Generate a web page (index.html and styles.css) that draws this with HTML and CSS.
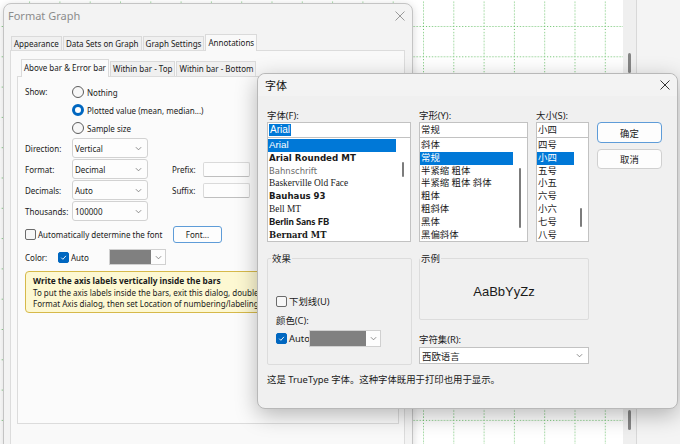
FILE: index.html
```html
<!DOCTYPE html>
<html lang="zh-CN">
<head>
    <meta charset="UTF-8">
    <meta name="viewport" content="width=device-width, initial-scale=1.0">
    <title>Format Graph</title>
    <link rel="stylesheet" href="styles.css">
</head>
<body>
    <!-- graph sheet behind the dialogs -->
    <div class="desktop">
        <div class="sheet">
            <svg width="623" height="444">
                <defs>
                    <pattern id="cells" x="-1.2" y="-4.3" width="30.3" height="30.3" patternUnits="userSpaceOnUse">
                        <line x1="0.5" y1="0" x2="0.5" y2="30.3" stroke="#5fbd5f" stroke-dasharray="1 2"/>
                        <line x1="0" y1="0.5" x2="30.3" y2="0.5" stroke="#5fbd5f" stroke-dasharray="1 2"/>
                    </pattern>
                </defs>
                <rect width="623" height="444" fill="url(#cells)"/>
            </svg>
        </div>
        <div class="vscroll"><span class="thumb"></span><span class="thumb"></span></div>
        <div class="side"></div>
    </div>

    <div class="window format-graph">
        <div class="titlebar">
            <span class="title">Format Graph</span>
            <svg class="close" viewBox="0 0 10 10"><path d="M0.5 0.5l9 9M9.5 0.5l-9 9"/></svg>
        </div>
        <div class="fg-body">
            <div class="tabs">
                <span class="tab">Appearance</span>
                <span class="tab">Data Sets on Graph</span>
                <span class="tab">Graph Settings</span>
                <span class="tab active">Annotations</span>
            </div>
            <div class="tab-panel">
                <div class="tabs sub">
                    <span class="tab active">Above bar &amp; Error bar</span>
                    <span class="tab">Within bar - Top</span>
                    <span class="tab">Within bar - Bottom</span>
                </div>
                <div class="sub-panel">
                    <div class="show">
                        <span class="lbl">Show:</span>
                        <div class="radios">
                            <label class="radio"><span class="dot"></span>Nothing</label>
                            <label class="radio on"><span class="dot"></span>Plotted value (mean, median...)</label>
                            <label class="radio"><span class="dot"></span>Sample size</label>
                        </div>
                    </div>
                    <div class="field">
                        <span class="lbl">Direction:</span>
                        <span class="select">Vertical<svg class="chev" viewBox="0 0 8 5"><path d="M1 1l3 3 3-3"/></svg></span>
                    </div>
                    <div class="field">
                        <span class="lbl">Format:</span>
                        <span class="select">Decimal<svg class="chev" viewBox="0 0 8 5"><path d="M1 1l3 3 3-3"/></svg></span>
                        <span class="lbl2">Prefix:</span>
                        <span class="textbox"></span>
                    </div>
                    <div class="field">
                        <span class="lbl">Decimals:</span>
                        <span class="select">Auto<svg class="chev" viewBox="0 0 8 5"><path d="M1 1l3 3 3-3"/></svg></span>
                        <span class="lbl2">Suffix:</span>
                        <span class="textbox"></span>
                    </div>
                    <div class="field">
                        <span class="lbl">Thousands:</span>
                        <span class="select">100000<svg class="chev" viewBox="0 0 8 5"><path d="M1 1l3 3 3-3"/></svg></span>
                    </div>
                    <div class="auto-font">
                        <label class="check"><span class="box"></span>Automatically determine the font</label>
                        <span class="button accent">Font...</span>
                    </div>
                    <div class="color-row">
                        <span class="lbl-short">Color:</span>
                        <label class="check auto"><span class="box on"><svg viewBox="0 0 10 10"><path d="M2.5 5.2l1.8 1.8 3.4-3.8"/></svg></span>Auto</label>
                        <span class="swatch"><span class="fill"></span><span class="arrow"><svg class="chev" viewBox="0 0 8 5"><path d="M1 1l3 3 3-3"/></svg></span></span>
                    </div>
                    <div class="tip">
                        <b>Write the axis labels vertically inside the bars</b>
                        <p>To put the axis labels inside the bars, exit this dialog, double-click the X axis to open the<br>Format Axis dialog, then set Location of numbering/labeling to Inside.</p>
                    </div>
                </div>
            </div>
        </div>
    </div>

    <div class="window font-dialog">
        <div class="titlebar">
            <span class="title">字体</span>
            <svg class="close" viewBox="0 0 10 10"><path d="M0.5 0.5l9 9M9.5 0.5l-9 9"/></svg>
        </div>
        <div class="fd-body">
            <div class="fd-top">
                <span class="cap">字体(F):</span>
                <span class="cap">字形(Y):</span>
                <span class="cap">大小(S):</span>
                <span></span>

                <div class="combo">
                    <div class="entry"><span class="sel-text">Arial</span></div>
                    <div class="list">
                        <ul>
                            <li class="picked f-arial">Arial</li>
                            <li class="f-rounded">Arial Rounded MT</li>
                            <li class="f-bahn">Bahnschrift</li>
                            <li class="f-bask">Baskerville Old Face</li>
                            <li class="f-bauhaus">Bauhaus 93</li>
                            <li class="f-bell">Bell MT</li>
                            <li class="f-berlin">Berlin Sans FB</li>
                            <li class="f-bernard">Bernard MT</li>
                        </ul>
                        <div class="gutter"><span class="thumb t-font"></span></div>
                    </div>
                </div>
                <div class="combo">
                    <div class="entry">常规</div>
                    <div class="list">
                        <ul>
                            <li>斜体</li>
                            <li class="picked">常规</li>
                            <li>半紧缩 粗体</li>
                            <li>半紧缩 粗体 斜体</li>
                            <li>粗体</li>
                            <li>粗斜体</li>
                            <li>黑体</li>
                            <li>黑偏斜体</li>
                        </ul>
                        <div class="gutter"><span class="thumb t-style"></span></div>
                    </div>
                </div>
                <div class="combo">
                    <div class="entry">小四</div>
                    <div class="list">
                        <ul>
                            <li>四号</li>
                            <li class="picked">小四</li>
                            <li>五号</li>
                            <li>小五</li>
                            <li>六号</li>
                            <li>小六</li>
                            <li>七号</li>
                            <li>八号</li>
                        </ul>
                        <div class="gutter"><span class="thumb t-size"></span></div>
                    </div>
                </div>
                <div class="actions">
                    <span class="button accent big">确定</span>
                    <span class="button">取消</span>
                </div>
            </div>

            <div class="fd-bottom">
                <fieldset class="effects">
                    <legend>效果</legend>
                    <label class="check"><span class="box"></span>下划线(U)</label>
                    <span class="cap color-cap">颜色(C):</span>
                    <div class="color-pick">
                        <label class="check clip"><span class="box on"><svg viewBox="0 0 10 10"><path d="M2.5 5.2l1.8 1.8 3.4-3.8"/></svg></span>Auto</label>
                        <span class="swatch wide"><span class="fill"></span><span class="arrow"><svg class="chev" viewBox="0 0 8 5"><path d="M1 1l3 3 3-3"/></svg></span></span>
                    </div>
                </fieldset>
                <div class="sample-col">
                    <fieldset class="sample">
                        <legend>示例</legend>
                        <span class="sample-text">AaBbYyZz</span>
                    </fieldset>
                    <span class="cap charset-cap">字符集(R):</span>
                    <span class="select charset">西欧语言<svg class="chev" viewBox="0 0 8 5"><path d="M1 1l3 3 3-3"/></svg></span>
                </div>
            </div>
            <p class="note">这是 TrueType 字体。这种字体既用于打印也用于显示。</p>
        </div>
    </div>
</body>
</html>
```
FILE: styles.css
```css
* {
    box-sizing: border-box;
}
body {
    margin: 0;
    width: 680px;
    height: 444px;
    overflow: hidden;
    position: relative;
    font-family: "Noto Sans", "Noto Sans CJK SC", sans-serif;
    font-size: 8px;
    color: #1a1a1a;
    background: #fff;
}
p {
    margin: 0;
}

/* background sheet */
.desktop {
    display: flex;
    height: 444px;
}
.sheet {
    width: 623px;
    background: #fff;
}
.sheet svg {
    display: block;
}
.vscroll {
    width: 14px;
    background: #efefef;
    border-right: 1px solid #d8d8d8;
    display: flex;
    flex-direction: column;
    align-items: center;
    justify-content: space-between;
    padding: 53px 0 14px;
}
.vscroll .thumb {
    width: 3px;
    height: 20px;
    border-radius: 2px;
    background: #858585;
}
.side {
    flex: 1;
    background: #f4f4f4;
}

/* windows */
.window {
    position: absolute;
    border: 1px solid #c4c4c4;
    border-radius: 8px;
}
.titlebar {
    display: flex;
    align-items: center;
    justify-content: space-between;
}
.close {
    width: 10px;
    height: 10px;
    fill: none;
    stroke-width: 1;
}

.format-graph {
    left: 3px;
    top: 3px;
    width: 410px;
    height: 480px;
    background: #f3f3f3;
    border-radius: 8px 8px 0 0;
    box-shadow: 0 2px 10px rgba(0, 0, 0, 0.16);
}
.format-graph .titlebar {
    height: 23px;
    padding: 0 7px 0 4px;
}
.format-graph .title {
    font-size: 11px;
    color: #8c8c8c;
}
.format-graph .close {
    stroke: #9a9a9a;
}
.fg-body {
    padding: 7px 7px 0 6px;
}
.tabs {
    display: flex;
    align-items: flex-end;
    height: 16px;
    margin-left: 1px;
    position: relative;
    z-index: 1;
}
.tab {
    height: 14px;
    line-height: 13px;
    padding: 0 2px;
    border: 1px solid #dadada;
    border-bottom: none;
    background: #f0f0f0;
    margin-right: 1px;
    white-space: nowrap;
}
.tab.active {
    height: 17px;
    line-height: 15px;
    background: #f9f9f9;
    margin-bottom: -1px;
}
.tab-panel {
    border: 1px solid #dcdcdc;
    background: #f9f9f9;
    height: 420px;
    padding: 8px 0 0 6px;
}
.tabs.sub {
    height: 17px;
    margin-left: 4px;
}
.tabs.sub .tab {
    height: 15px;
    line-height: 14px;
}
.tabs.sub .tab.active {
    height: 18px;
    line-height: 16px;
    background: #fbfbfb;
}
.sub-panel {
    width: 382px;
    height: 348px;
    border: 1px solid #dcdcdc;
    background: #fbfbfb;
    padding: 6px 0 0 7px;
}

.show {
    display: flex;
}
.lbl {
    width: 47px;
    flex: none;
    white-space: nowrap;
}
.show .lbl {
    line-height: 18px;
}
.radio {
    display: flex;
    align-items: center;
    height: 18px;
    gap: 3px;
}
.dot {
    width: 12px;
    height: 12px;
    border-radius: 50%;
    border: 1px solid #5d5d5d;
    background: #f7f7f7;
}
.radio.on .dot {
    border: 3.5px solid #0067c0;
    background: #fff;
}

.field {
    display: flex;
    align-items: center;
    height: 20px;
    margin-top: 1px;
}
.select {
    width: 76px;
    height: 20px;
    border: 1px solid #d2d2d2;
    border-radius: 3px;
    background: #fdfdfd;
    display: flex;
    align-items: center;
    justify-content: space-between;
    padding: 0 5px 0 2px;
}
.chev {
    width: 7px;
    height: 5px;
    fill: none;
    stroke: #707070;
    stroke-width: 0.9;
}
.lbl2 {
    margin-left: 24px;
    width: 31px;
}
.textbox {
    width: 47px;
    height: 15px;
    border: 1px solid #dadada;
    border-bottom-color: #bfbfbf;
    background: #fdfdfd;
    border-radius: 2px;
}

.check {
    display: flex;
    align-items: center;
    gap: 2px;
    height: 13px;
    line-height: 13px;
    white-space: nowrap;
}
.box {
    width: 11px;
    height: 11px;
    border: 1px solid #6b6b6b;
    border-radius: 2px;
    background: #f7f7f7;
    flex: none;
}
.box.on {
    border-color: #0067c0;
    background: #0067c0;
}
.box svg {
    display: block;
    width: 9px;
    height: 9px;
    fill: none;
    stroke: #fff;
    stroke-width: 1;
}
.auto-font {
    display: flex;
    align-items: center;
    height: 19px;
    margin-top: 4px;
}
.auto-font .check {
    width: 148px;
}
.button {
    height: 17px;
    width: 49px;
    border: 1px solid #d0d0d0;
    border-radius: 3px;
    background: #fdfdfd;
    display: flex;
    align-items: center;
    justify-content: center;
}
.button.accent {
    border-color: #5e9cd8;
}
.color-row {
    display: flex;
    align-items: center;
    height: 16px;
    margin-top: 5px;
}
.lbl-short {
    width: 33px;
}
.check.auto {
    width: 51px;
}
.swatch {
    display: flex;
    width: 57px;
    height: 16px;
    border: 1px solid #d0d0d0;
    background: #fdfdfd;
}
.swatch .fill {
    flex: 1;
    background: #808080;
}
.swatch .arrow {
    width: 14px;
    display: flex;
    align-items: center;
    justify-content: center;
}
.tip {
    margin-top: 6px;
    width: 370px;
    height: 42px;
    border: 1px solid #d6b94a;
    border-radius: 4px;
    background: #fdf8d2;
    padding: 2px 7px;
    line-height: 11px;
}
.tip b {
    display: block;
    line-height: 13px;
    font-size: 8.3px;
}
.tip p {
    white-space: nowrap;
}

/* font dialog */
.font-dialog {
    left: 257px;
    top: 73px;
    width: 421px;
    height: 336px;
    background: #f0f0f0;
    border-color: #b8b8b8;
    box-shadow: 0 6px 22px rgba(0, 0, 0, 0.28);
    font-size: 9.4px;
}
.font-dialog .titlebar {
    height: 22px;
    padding: 0 7px 0 7px;
    background: #f3f3f3;
    border-radius: 8px 8px 0 0;
}
.font-dialog .title {
    font-size: 11px;
    color: #111;
}
.font-dialog .close {
    stroke: #333;
}
.fd-body {
    padding: 13px 0 0 9px;
}
.fd-top {
    display: grid;
    grid-template-columns: 144px 109px 53px 65px;
    column-gap: 8px;
}
.cap {
    line-height: 13px;
    height: 13px;
}
.entry {
    height: 16px;
    border: 1px solid #c2c2c2;
    background: #fff;
    padding: 0 1px;
    line-height: 14px;
    white-space: nowrap;
}
.sel-text {
    display: inline-block;
    background: #0078d7;
    color: #fff;
    padding: 0 1px;
    line-height: 12px;
    font-family: "Liberation Sans", sans-serif;
    font-size: 10px;
}
.list {
    height: 104px;
    border: 1px solid #c2c2c2;
    border-top: none;
    background: #fff;
    display: flex;
}
.list ul {
    flex: 1;
    margin: 0;
    padding: 1px 0 0;
    list-style: none;
    overflow: hidden;
}
.list li {
    height: 12.8px;
    line-height: 12.8px;
    padding-left: 1px;
    white-space: nowrap;
}
.list li.picked {
    background: #0078d7;
    color: #fff;
}
.gutter {
    width: 14px;
    display: flex;
    justify-content: center;
}
.gutter .thumb {
    width: 2px;
    border-radius: 1px;
    background: #7c7c7c;
}
.t-font {
    height: 15px;
    margin-top: 24px;
}
.t-style {
    height: 60px;
    margin-top: 30px;
}
.t-size {
    height: 19px;
    margin-top: 70px;
}
.f-arial {
    font-family: "Liberation Sans", sans-serif;
    font-size: 9.8px;
}
.f-rounded {
    font-family: "DejaVu Sans", sans-serif;
    font-weight: bold;
    font-size: 8.7px;
}
.f-bahn {
    font-family: "DejaVu Sans Condensed", "DejaVu Sans", sans-serif;
    color: #6a6a6a;
}
.f-bask {
    font-family: "Liberation Serif", serif;
}
.f-bauhaus {
    font-family: "DejaVu Sans", sans-serif;
    font-weight: bold;
    font-size: 8.6px;
}
.f-bell {
    font-family: "Liberation Serif", serif;
}
.f-berlin {
    font-family: "Lato", sans-serif;
    font-weight: 900;
}
.f-bernard {
    font-family: "DejaVu Serif Condensed", "DejaVu Serif", serif;
    font-weight: bold;
}
.actions {
    display: flex;
    flex-direction: column;
    gap: 6px;
}
.actions .button {
    width: 65px;
    height: 20px;
    border-radius: 4px;
}
.actions .button.big {
    height: 21px;
}

.fd-bottom {
    display: flex;
    gap: 7px;
    margin-top: 10px;
}
fieldset {
    margin: 0;
    border: 1px solid #dcdcdc;
    border-radius: 2px;
    padding: 0;
}
legend {
    line-height: 13px;
    padding: 0 1px;
}
.effects {
    width: 145px;
    height: 113px;
    padding: 30px 0 0 8px;
}
.effects legend {
    margin-left: -5px;
}
.color-cap {
    display: block;
    margin-top: 6px;
}
.color-pick {
    display: flex;
    align-items: center;
    margin-top: 3px;
}
.check.clip {
    width: 33px;
    overflow: hidden;
}
.swatch.wide {
    width: 72px;
    height: 17px;
}
.sample-col {
    width: 170px;
    display: flex;
    flex-direction: column;
}
.sample {
    height: 68px;
    display: flex;
    justify-content: center;
}
.sample-text {
    font-family: "Liberation Sans", sans-serif;
    font-size: 13px;
    margin: 19px auto 0;
}
.charset-cap {
    margin-top: 13px;
}
.select.charset {
    width: 170px;
    height: 17px;
    margin-top: 1px;
    border-radius: 0;
    border-color: #c2c2c2;
    background: #fff;
}
.note {
    margin-top: 8px;
    line-height: 13px;
}
```
